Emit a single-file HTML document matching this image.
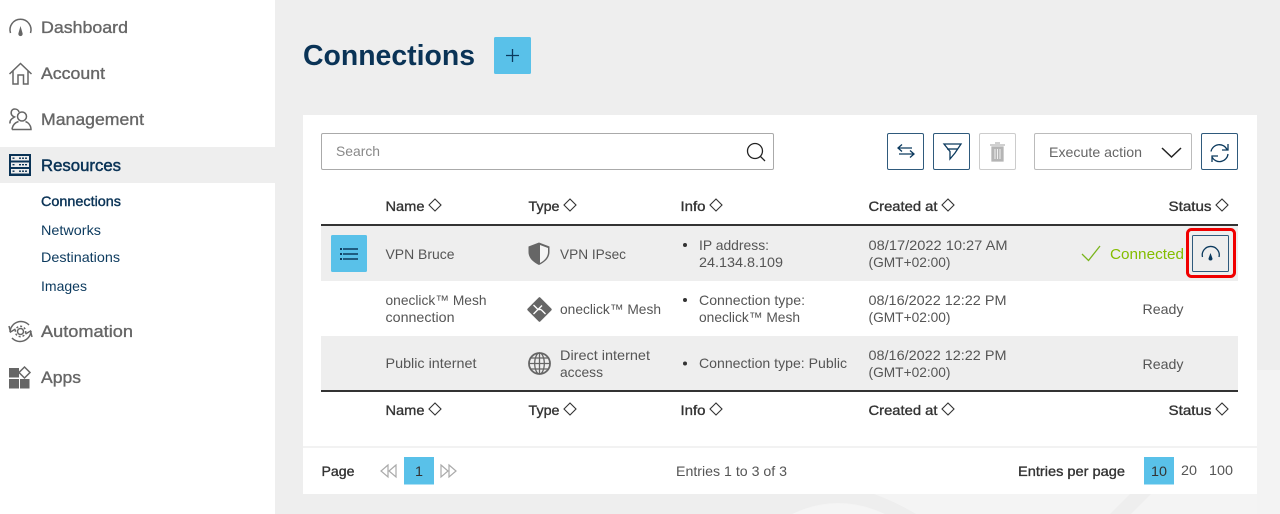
<!DOCTYPE html>
<html><head><meta charset="utf-8"><title>Connections</title>
<style>
html,body{margin:0;padding:0;background:#eee;width:1280px;height:514px;overflow:hidden}
svg{display:block}
text{font-family:"Liberation Sans",sans-serif;font-size:14px;fill:#555}
.n{font-size:17px;fill:#666;stroke:#666;stroke-width:.35}
.s{fill:#0c3a5e;font-size:14px}
.h{fill:#333;font-size:14px;stroke:#333;stroke-width:.35}
.i{fill:none;stroke:#0c3a5e;stroke-width:1.3}
.g{fill:none;stroke:#666;stroke-width:1.5}
.d{fill:none;stroke:#333;stroke-width:1.1}
</style></head><body>
<svg width="1280" height="514" viewBox="0 0 1280 514" xmlns="http://www.w3.org/2000/svg">
<rect width="1280" height="514" fill="#eeeeee"/>
<!-- background shapes -->
<path d="M780 514L860 494H1280V514Z" fill="#f4f4f4"/>
<path d="M792 514Q838 494 885 514Z" fill="#f5f5f5"/>
<path d="M800 494H874Q896 502 916 514H885Q838 492 792 514L740 514V494Z" fill="#eeeeee"/>
<path d="M1130 494H1151L1131 514H1110Z" fill="#eeeeee"/>
<rect x="1257" y="370" width="23" height="144" fill="#f3f3f3"/>
<!-- sidebar -->
<rect width="275" height="514" fill="#fff"/>
<rect y="147" width="275" height="36" fill="#eeeeee"/>
<text class="n" x="41" y="33" textLength="87" lengthAdjust="spacingAndGlyphs">Dashboard</text>
<text class="n" x="41" y="79" textLength="64" lengthAdjust="spacingAndGlyphs">Account</text>
<text class="n" x="41" y="125" textLength="103" lengthAdjust="spacingAndGlyphs">Management</text>
<text class="n" style="fill:#0a3356;stroke:#0a3356;stroke-width:.5" x="41" y="171" textLength="80" lengthAdjust="spacingAndGlyphs">Resources</text>
<text class="s" style="fill:#0a3356;stroke:#0a3356;stroke-width:.4" x="41" y="206" textLength="80" lengthAdjust="spacingAndGlyphs">Connections</text>
<text class="s" x="41" y="235" textLength="60" lengthAdjust="spacingAndGlyphs">Networks</text>
<text class="s" x="41" y="262" textLength="79" lengthAdjust="spacingAndGlyphs">Destinations</text>
<text class="s" x="41" y="291" textLength="46" lengthAdjust="spacingAndGlyphs">Images</text>
<text class="n" x="41" y="337" textLength="92" lengthAdjust="spacingAndGlyphs">Automation</text>
<text class="n" x="41" y="383" textLength="40" lengthAdjust="spacingAndGlyphs">Apps</text>
<!-- sidebar icons -->
<path class="g" d="M10.500 33A10.500 10.500 0 1 1 30.500 33"/><path d="M20.500 26L22.500 33A2.200 2.200 0 1 1 18.500 33Z" fill="#666"/>
<path class="g" d="M9.500 74L20.500 63.500L31.500 74M13 71V84H18V75H23.500V84H28V71"/>
<g class="g"><circle cx="22" cy="116.500" r="4.500"/><path d="M12 129.500H31C31 125 28 122.500 25.500 121.500M12 129.500C12.500 125 15.500 122.500 18.500 121.500"/><path d="M19 112C18 108.500 13 108 11.500 111C10.500 114 12 116 14.500 117C12 118.500 9.500 120 10 123.500"/></g>
<rect x="9" y="154" width="22" height="22" fill="#0a3356"/>
<rect x="11" y="156" width="18" height="4.500" fill="#eee"/><rect x="11" y="162.500" width="18" height="4.500" fill="#eee"/><rect x="11" y="169" width="18" height="4.500" fill="#eee"/>
<path d="M12.500 158.200H15M19 158.200H28M12.500 164.700H15M19 164.700H28M12.500 171.200H15M19 171.200H28" stroke="#0a3356" stroke-width="1.300" stroke-dasharray="2 1"/>
<g class="g"><path d="M10 332A11 11 0 0 1 29 325M31 331A11 11 0 0 1 12 338"/><path d="M9 326L10.500 332L15.500 329M32 337L30.500 331L25.500 334"/><circle cx="20.500" cy="331.500" r="3"/><circle cx="20.500" cy="331.500" r="5.200" stroke-dasharray="2 2"/></g>
<g fill="#666"><rect x="9" y="368" width="10" height="9.500"/><rect x="9" y="379" width="10" height="9.500"/><rect x="20" y="379" width="9.500" height="9.500"/></g><path class="g" d="M24.500 367L30 372.500L24.500 378L19 372.500Z"/>
<!-- header -->
<text x="303" y="65" style="font-size:29px;font-weight:700;fill:#0a3356" textLength="172" lengthAdjust="spacingAndGlyphs">Connections</text>
<rect x="494" y="37" width="37" height="37" rx="1.500" fill="#59c1e9"/>
<path d="M512.500 49V62M506 55.500H519" stroke="#0c3a5e" stroke-width="1.300"/>
<!-- card -->
<rect x="303" y="115" width="954" height="379" fill="#fff"/>
<rect x="303" y="446" width="954" height="2" fill="#f2f2f2"/>
<rect x="321.500" y="133.500" width="452" height="36" rx="1.500" fill="#fff" stroke="#aaa"/>
<text x="336" y="156" style="fill:#888" textLength="44" lengthAdjust="spacingAndGlyphs">Search</text>
<circle cx="755" cy="151" r="7.500" fill="none" stroke="#222" stroke-width="1.300"/><path d="M760.500 156.500L765 161" stroke="#222" stroke-width="1.300"/>
<!-- toolbar -->
<g fill="#fff" stroke="#2f5a7c" stroke-width="1"><rect x="887.500" y="133.500" width="36" height="36" rx="1.500"/><rect x="933.500" y="133.500" width="36" height="36" rx="1.500"/><rect x="1201.500" y="133.500" width="36" height="36" rx="1.500"/></g>
<path class="i" d="M912 148H898M902 144.500L898 148L902 151.500M899 154H914M910 150.500L914 154L910 157.500"/>
<path class="i" d="M944 144H961L955 153L950 159V151.500Z"/><path class="i" d="M947 149H958"/>
<rect x="979.500" y="133.500" width="36" height="36" rx="1.500" fill="#fff" stroke="#ccc"/>
<path d="M992 147H1003V161H992ZM990 145H1005M995 143H1000" fill="#b5b5b5" stroke="#b5b5b5" stroke-width="1.300"/>
<path d="M995 149V159M997.500 149V159M1000 149V159" stroke="#fff" stroke-width=".8"/>
<rect x="1034.500" y="133.500" width="157" height="36" rx="1.500" fill="#fff" stroke="#bbb"/>
<text x="1049" y="157" style="fill:#666" textLength="93" lengthAdjust="spacingAndGlyphs">Execute action</text>
<path d="M1162 148L1171.500 157L1181 148" fill="none" stroke="#222" stroke-width="1.500"/>
<path class="i" d="M1211 151.500A8.500 8.500 0 0 1 1227 149.500M1228 144V150H1222M1228 154A8.500 8.500 0 0 1 1212 157M1212 162V156H1218"/>
<!-- rows -->
<rect x="321" y="226" width="917" height="55" fill="#eeeeee"/>
<rect x="321" y="336" width="917" height="54" fill="#eeeeee"/>
<rect x="321" y="224" width="917" height="2" fill="#333"/>
<rect x="321" y="390" width="917" height="2" fill="#333"/>
<!-- heads -->
<text class="h" x="385.500" y="211" textLength="39" lengthAdjust="spacingAndGlyphs">Name</text><path class="d" d="M435 199L441 205L435 211L429 205Z"/>
<text class="h" x="528.500" y="211" textLength="31" lengthAdjust="spacingAndGlyphs">Type</text><path class="d" d="M570 199L576 205L570 211L564 205Z"/>
<text class="h" x="680.500" y="211" textLength="25" lengthAdjust="spacingAndGlyphs">Info</text><path class="d" d="M716 199L722 205L716 211L710 205Z"/>
<text class="h" x="868.500" y="211" textLength="69" lengthAdjust="spacingAndGlyphs">Created at</text><path class="d" d="M948 199L954 205L948 211L942 205Z"/>
<text class="h" x="1168.500" y="211" textLength="43" lengthAdjust="spacingAndGlyphs">Status</text><path class="d" d="M1222 199L1228 205L1222 211L1216 205Z"/>
<text class="h" x="385.500" y="415" textLength="39" lengthAdjust="spacingAndGlyphs">Name</text><path class="d" d="M435 403L441 409L435 415L429 409Z"/>
<text class="h" x="528.500" y="415" textLength="31" lengthAdjust="spacingAndGlyphs">Type</text><path class="d" d="M570 403L576 409L570 415L564 409Z"/>
<text class="h" x="680.500" y="415" textLength="25" lengthAdjust="spacingAndGlyphs">Info</text><path class="d" d="M716 403L722 409L716 415L710 409Z"/>
<text class="h" x="868.500" y="415" textLength="69" lengthAdjust="spacingAndGlyphs">Created at</text><path class="d" d="M948 403L954 409L948 415L942 409Z"/>
<text class="h" x="1168.500" y="415" textLength="43" lengthAdjust="spacingAndGlyphs">Status</text><path class="d" d="M1222 403L1228 409L1222 415L1216 409Z"/>
<!-- row 1 -->
<rect x="331" y="235" width="36" height="37" rx="1.500" fill="#59c1e9"/>
<path d="M343 249H358M343 254H358M343 259H358" stroke="#0c3a5e" stroke-width="1.500"/><path d="M340 249H342M340 254H342M340 259H342" stroke="#0c3a5e" stroke-width="2"/>
<text x="385.500" y="259" textLength="69" lengthAdjust="spacingAndGlyphs">VPN Bruce</text>
<path d="M539 242.500L549.500 246.500V252C549.500 258 545 262 539 265C533 262 528.500 258 528.500 252V246.500Z" fill="#666"/><path d="M540 245L548 248V252C548 257 544.500 260.500 540 263Z" fill="#f5f5f5"/>
<text x="560" y="259" textLength="66" lengthAdjust="spacingAndGlyphs">VPN IPsec</text>
<circle cx="685" cy="245" r="2" fill="#333"/>
<text x="699" y="250" textLength="70" lengthAdjust="spacingAndGlyphs">IP address:</text>
<text x="699" y="267" textLength="84" lengthAdjust="spacingAndGlyphs">24.134.8.109</text>
<text x="868.500" y="250" textLength="139" lengthAdjust="spacingAndGlyphs">08/17/2022 10:27 AM</text>
<text x="868.500" y="267" textLength="82" lengthAdjust="spacingAndGlyphs">(GMT+02:00)</text>
<path d="M1082 254L1088.500 260.500L1100 246" fill="none" stroke="#7ab51d" stroke-width="1.300"/>
<text x="1110" y="259" style="fill:#84bd00;font-size:15px" textLength="74" lengthAdjust="spacingAndGlyphs">Connected</text>
<rect x="1187.500" y="229.500" width="47" height="47" rx="4" fill="none" stroke="#f00000" stroke-width="3"/>
<rect x="1192.500" y="235.500" width="36" height="36" rx="1" fill="#eee" stroke="#2f5a7c"/>
<path class="i" d="M1202.500 257A8.500 8.500 0 1 1 1219 257"/><path d="M1210.500 253L1212.500 258.500A2 2 0 1 1 1208.500 258.500Z" fill="#0c3a5e"/>
<!-- row 2 -->
<text x="385.500" y="305" textLength="101" lengthAdjust="spacingAndGlyphs">oneclick™ Mesh</text>
<text x="385.500" y="322" textLength="69" lengthAdjust="spacingAndGlyphs">connection</text>
<path d="M539.500 298.500L550.500 309.500L539.500 320.500L528.500 309.500Z" fill="#666" stroke="#666" stroke-linejoin="round" stroke-width="2.500"/>
<path d="M533.500 305L538 309.500L533.500 314M538 309.500L542 305.500M545.500 314L541 309.500M538 309.500L541 309.500" fill="none" stroke="#fff" stroke-width="1.400"/>
<text x="560" y="314" textLength="101" lengthAdjust="spacingAndGlyphs">oneclick™ Mesh</text>
<circle cx="685" cy="300" r="2" fill="#333"/>
<text x="699" y="305" textLength="106" lengthAdjust="spacingAndGlyphs">Connection type:</text>
<text x="699" y="322" textLength="101" lengthAdjust="spacingAndGlyphs">oneclick™ Mesh</text>
<text x="868.500" y="305" textLength="138" lengthAdjust="spacingAndGlyphs">08/16/2022 12:22 PM</text>
<text x="868.500" y="322" textLength="82" lengthAdjust="spacingAndGlyphs">(GMT+02:00)</text>
<text x="1142.500" y="314" textLength="41" lengthAdjust="spacingAndGlyphs">Ready</text>
<!-- row 3 -->
<text x="385.500" y="368" textLength="91" lengthAdjust="spacingAndGlyphs">Public internet</text>
<g fill="none" stroke="#666" stroke-width="1.300"><circle cx="539.500" cy="363.500" r="10.500" stroke-width="1.800"/><ellipse cx="539.500" cy="363.500" rx="4.800" ry="10.500"/><path d="M539.500 353V374M529 363.500H550M530.500 358H548.500M530.500 369H548.500"/></g>
<text x="560" y="360" textLength="90" lengthAdjust="spacingAndGlyphs">Direct internet</text>
<text x="560" y="377" textLength="43" lengthAdjust="spacingAndGlyphs">access</text>
<circle cx="685" cy="363.500" r="2" fill="#333"/>
<text x="699" y="368" textLength="148" lengthAdjust="spacingAndGlyphs">Connection type: Public</text>
<text x="868.500" y="360" textLength="138" lengthAdjust="spacingAndGlyphs">08/16/2022 12:22 PM</text>
<text x="868.500" y="377" textLength="82" lengthAdjust="spacingAndGlyphs">(GMT+02:00)</text>
<text x="1142.500" y="369" textLength="41" lengthAdjust="spacingAndGlyphs">Ready</text>
<!-- footer -->
<text class="h" x="321.500" y="476" textLength="33" lengthAdjust="spacingAndGlyphs">Page</text>
<path d="M388 465L381 471L388 477ZM396 465L389 471L396 477Z" fill="none" stroke="#aaa" stroke-width="1.200"/>
<rect x="404" y="457" width="30" height="27.500" fill="#59c1e9"/>
<text x="415" y="476" style="fill:#333" textLength="8" lengthAdjust="spacingAndGlyphs">1</text>
<path d="M441 465L448 471L441 477ZM449 465L456 471L449 477Z" fill="none" stroke="#aaa" stroke-width="1.200"/>
<text x="676" y="476" textLength="111" lengthAdjust="spacingAndGlyphs">Entries 1 to 3 of 3</text>
<text class="h" x="1018" y="476" textLength="107" lengthAdjust="spacingAndGlyphs">Entries per page</text>
<rect x="1144" y="457" width="30" height="27.500" fill="#59c1e9"/>
<text x="1151" y="476" style="fill:#333" textLength="16" lengthAdjust="spacingAndGlyphs">10</text>
<text x="1181" y="475" textLength="16" lengthAdjust="spacingAndGlyphs">20</text>
<text x="1209" y="475" textLength="24" lengthAdjust="spacingAndGlyphs">100</text>
</svg>
</body></html>
